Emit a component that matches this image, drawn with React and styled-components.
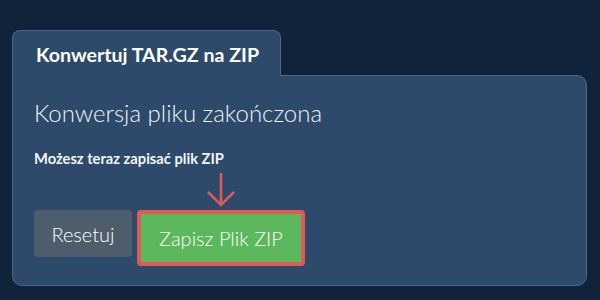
import React from 'react';
import styled, { createGlobalStyle } from 'styled-components';

const GlobalStyle = createGlobalStyle`
  html, body {
    margin: 0;
    padding: 0;
    background: #10233a;
    font-family: Lato, "Open Sans", sans-serif;
    color: #ffffff;
  }
`;

const App = () => {
  return (
    <Page>
      <GlobalStyle />
      <Card>
        <Tab>Konwertuj TAR.GZ na ZIP</Tab>
        <Panel>
          <Heading>Konwersja pliku zakończona</Heading>
          <Note>Możesz teraz zapisać plik ZIP</Note>
          <Actions>
            <Button variant="reset">Resetuj</Button>
            <Highlight>
              <Arrow width="30" height="36" viewBox="0 0 30 36">
                <path
                  d="M15 1 V33 M2 20 L15 33 L28 20"
                  fill="none"
                  stroke="#e05a58"
                  strokeWidth="2.6"
                />
              </Arrow>
              <Button variant="save">Zapisz Plik ZIP</Button>
            </Highlight>
          </Actions>
        </Panel>
      </Card>
    </Page>
  );
};

//-----------Styles--------------

const Page = styled.div`
  width: 600px;
  height: 300px;
  padding: 30px 13px 0 12px;
  box-sizing: border-box;
`;

const Card = styled.div`
  display: flex;
  flex-direction: column;
  align-items: flex-start;
`;

const Tab = styled.div`
  position: relative;
  z-index: 1;
  width: 269px;
  height: 46px;
  box-sizing: border-box;
  margin-bottom: -1px;
  padding: 12px 0 0 23px;
  background: #2d4a6a;
  border: 1px solid #4b6887;
  border-bottom: none;
  border-radius: 8px 8px 0 0;
  font-size: 19.6px;
  font-weight: 700;
  white-space: nowrap;
`;

const Panel = styled.div`
  width: 100%;
  height: 211px;
  box-sizing: border-box;
  padding: 22px 20px 0 21px;
  background: #2d4a6a;
  border: 1px solid #4b6887;
  border-radius: 0 10px 10px 10px;
`;

const Heading = styled.h2`
  margin: 0;
  font-size: 24px;
  font-weight: 300;
  line-height: 30px;
  color: #eef2f6;
`;

const Note = styled.p`
  margin: 21px 0 0;
  font-size: 14.7px;
  font-weight: 700;
  line-height: 19px;
  color: #f2f4f7;
`;

const Actions = styled.div`
  display: flex;
  align-items: flex-start;
  gap: 5px;
  margin-top: 42px;
`;

const Highlight = styled.div`
  position: relative;
  border: 4px solid #e05a58;
  border-radius: 4px;
  display: flex;
`;

const Arrow = styled.svg`
  position: absolute;
  left: 50%;
  top: -42px;
  transform: translateX(-50%);
`;

const Button = styled.button`
  box-sizing: border-box;
  width: ${({ variant }) => (variant === 'save' ? '160px' : '98px')};
  height: ${({ variant }) => (variant === 'save' ? '48px' : '47px')};
  padding: 0;
  border: none;
  border-radius: ${({ variant }) => (variant === 'save' ? '0' : '4px')};
  background: ${({ variant }) => (variant === 'save' ? '#5cb85c' : '#4e5d6c')};
  color: #ffffff;
  font-family: Lato, "Open Sans", sans-serif;
  font-size: 20px;
  font-weight: 300;
  white-space: nowrap;
  text-align: center;
  cursor: pointer;
`;

//-----------------End Styles---------------

export default App;
